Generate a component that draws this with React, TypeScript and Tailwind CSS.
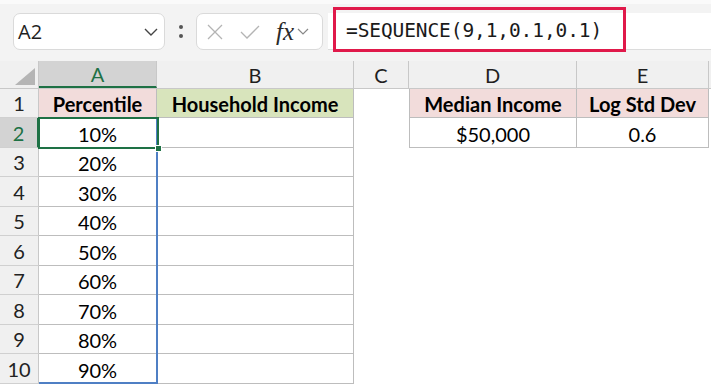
import React from 'react';

const rowHeights = [29, 30, 29, 30, 29, 30, 29, 30, 29, 30];
const percents = ['10%', '20%', '30%', '40%', '50%', '60%', '70%', '80%', '90%'];

const line = 'border-[#bdbdbd]';

function Toolbar() {
  return (
    <div className="relative h-[61px] bg-[#f3f3f3] border-t-[4px] border-[#fafafa]">
      <div className="flex items-start pt-[9px] pl-[13px]">
        {/* name box */}
        <div className="w-[152px] h-[37px] bg-white rounded-[7px] border border-[#dadada] flex items-center justify-between pl-[4px] pr-[6px]">
          <span className="text-[20px] text-[#1f1f1f] font-['Open_Sans']">A2</span>
          <svg width="14" height="8" viewBox="0 0 14 8" fill="none">
            <path d="M1 1l6 6 6-6" stroke="#444" strokeWidth="1.4" />
          </svg>
        </div>
        {/* dots */}
        <div className="w-[31px] h-[37px] flex flex-col items-center justify-center gap-[5px]">
          <div className="w-[4px] h-[4px] rounded-full bg-[#555]" />
          <div className="w-[4px] h-[4px] rounded-full bg-[#555]" />
        </div>
        {/* cancel / enter / fx */}
        <div className="w-[127px] h-[37px] bg-white rounded-[7px] border border-[#dadada] flex items-center pl-[9px]">
          <svg width="18" height="18" viewBox="0 0 18 18" fill="none">
            <path d="M2 2l14 14M16 2L2 16" stroke="#b4b4b4" strokeWidth="1.3" />
          </svg>
          <svg width="20" height="16" viewBox="0 0 20 16" fill="none" className="ml-[16px]">
            <path d="M1 8l6 6L19 2" stroke="#b4b4b4" strokeWidth="1.3" />
          </svg>
          <span className="ml-[16px] text-[25px] italic font-['Liberation_Serif'] text-[#2a2a2a] leading-none">fx</span>
          <svg width="12" height="7" viewBox="0 0 12 7" fill="none" className="ml-[3px]">
            <path d="M1 1l5 5 5-5" stroke="#888" strokeWidth="1.2" />
          </svg>
        </div>
        {/* formula input */}
        <div className="ml-[5px] flex-1 h-[37px] bg-white border-b border-[#dcdcdc] flex items-center pl-[18px]">
          <span className="text-[19.5px] font-['DejaVu_Sans_Mono'] text-[#1a1a1a] tracking-[-0.1px]">=SEQUENCE(9,1,0.1,0.1)</span>
        </div>
      </div>
      {/* highlight annotation */}
      <div className="absolute left-[333px] top-[3px] w-[293px] h-[45px] border-[3px] border-[#e0194a]" />
    </div>
  );
}

function ColumnHeaders() {
  const cols = [
    { l: 'B', w: 'w-[197px]' },
    { l: 'C', w: 'w-[55px]' },
    { l: 'D', w: 'w-[168px]' },
    { l: 'E', w: 'w-[132px]' },
  ];
  return (
    <div className="flex h-[28px] bg-[#f0f0f0] border-b border-[#c8c8c8] text-[20px] text-[#1f1f1f]">
      <div className="w-[39px] h-full border-r border-[#c8c8c8] relative">
        <svg width="20" height="17" viewBox="0 0 20 17" className="absolute right-[3px] bottom-[3px]">
          <path d="M20 0V17H0Z" fill="#b5b5b5" />
        </svg>
      </div>
      <div className="w-[118px] h-full bg-[#d3d3d3] border-r border-[#c8c8c8] border-b-[2px] border-b-[#1e7145] flex items-center justify-center text-[#1e7145]">
        A
      </div>
      {cols.map((c) => (
        <div key={c.l} className={`${c.w} h-full border-r border-[#c8c8c8] flex items-center justify-center`}>
          {c.l}
        </div>
      ))}
      <div className="flex-1" />
    </div>
  );
}

export default function App() {
  return (
    <div className="w-[711px] h-[388px] overflow-hidden bg-white font-['Lato'] text-black">
      <Toolbar />
      <ColumnHeaders />
      <div className="relative">
        {rowHeights.map((h, i) => {
          const r = i + 1;
          const selected = r === 2;
          return (
            <div key={r} className="flex" style={{ height: h }}>
              <div
                className={`w-[39px] h-full flex items-center justify-center text-[20px] border-b border-[#d0d0d0] ${
                  selected
                    ? 'bg-[#d3d3d3] text-[#1e7145] border-r-[2px] border-r-[#1e7145]'
                    : 'bg-[#f0f0f0] text-[#222] border-r border-r-[#c8c8c8]'
                }`}
              >
                {r}
              </div>
              <div
                className={`w-[118px] h-full flex items-center justify-center pt-[2px] text-[20px] border-r border-b ${line} ${
                  r === 1 ? 'bg-[#f2dcdb] font-bold text-[20.5px]' : ''
                }`}
              >
                {r === 1 ? 'Percentile' : percents[r - 2]}
              </div>
              <div
                className={`w-[197px] h-full flex items-center justify-center pt-[2px] text-[20px] border-r border-b ${line} ${
                  r === 1 ? 'bg-[#d8e4bc] font-bold text-[20.5px]' : ''
                }`}
              >
                {r === 1 ? 'Household Income' : ''}
              </div>
              <div className="w-[55px] h-full" />
              {r <= 2 ? (
                <>
                  <div
                    className={`w-[168px] h-full flex items-center justify-center pt-[2px] text-[20px] border-l border-r border-b ${line} ${
                      r === 1 ? 'bg-[#f2dcdb] font-bold text-[20.5px]' : ''
                    }`}
                  >
                    {r === 1 ? 'Median Income' : '$50,000'}
                  </div>
                  <div
                    className={`w-[132px] h-full flex items-center justify-center pt-[2px] text-[20px] border-r border-b ${line} ${
                      r === 1 ? 'bg-[#f2dcdb] font-bold text-[20.5px]' : ''
                    }`}
                  >
                    {r === 1 ? 'Log Std Dev' : '0.6'}
                  </div>
                </>
              ) : null}
            </div>
          );
        })}
        {/* spill range outline A2:A10 */}
        <div className="absolute left-[39px] top-[29px] w-[119px] h-[266px] border-r-[2px] border-b-[2px] border-[#4f7fc4]" />
        {/* active cell A2 */}
        <div className="absolute left-[38px] top-[28px] w-[121px] h-[32px] border-[2px] border-[#1e7145]" />
        <div className="absolute left-[155px] top-[56px] w-[7px] h-[7px] bg-[#1e7145] border border-white" />
      </div>
    </div>
  );
}
